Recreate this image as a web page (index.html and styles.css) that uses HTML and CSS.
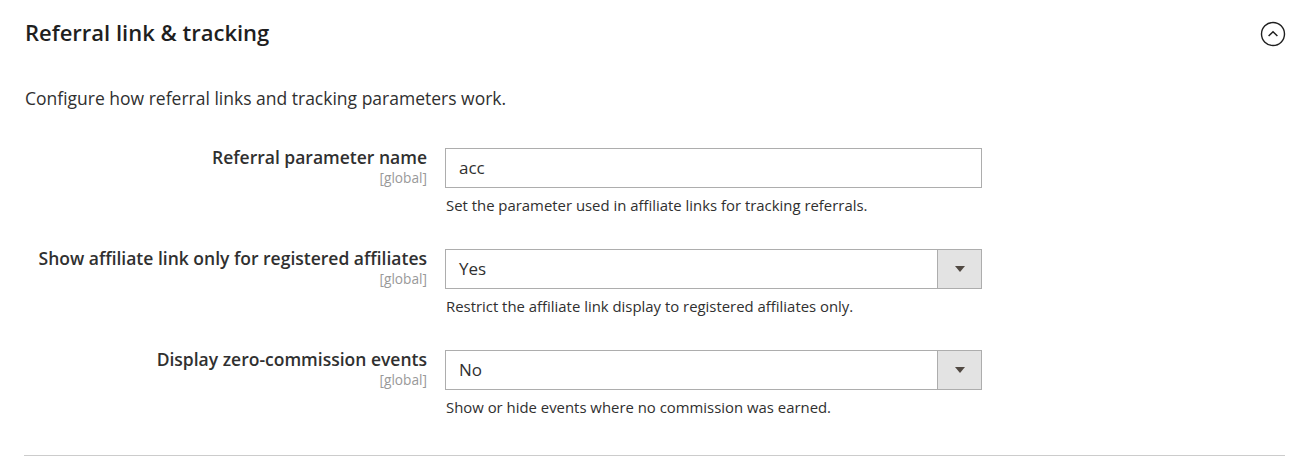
FILE: index.html
```html
<!DOCTYPE html>
<html lang="en">
<head>
	<meta charset="UTF-8">
	<title>Referral link &amp; tracking</title>
	<link rel="stylesheet" href="styles.css">
</head>
<body>
	<div class="section">
		<div class="section-head">
			<h3>Referral link &amp; tracking</h3>
			<span class="toggle">
				<svg width="26" height="26" viewBox="0 0 26 26">
					<circle cx="13" cy="13" r="11.5" fill="none" stroke="#1f1f1f" stroke-width="1.4"/>
					<path d="M8.6 15 L13 10.8 L17.4 15" fill="none" stroke="#1f1f1f" stroke-width="1.5"/>
				</svg>
			</span>
		</div>
		<p class="comment">Configure how referral links and tracking parameters work.</p>

		<div class="row">
			<div class="label">
				<label>Referral parameter name</label>
				<span class="scope">[global]</span>
			</div>
			<div class="value">
				<input class="input-text" type="text" value="acc">
				<p class="note">Set the parameter used in affiliate links for tracking referrals.</p>
			</div>
		</div>

		<div class="row">
			<div class="label">
				<label>Show affiliate link only for registered affiliates</label>
				<span class="scope">[global]</span>
			</div>
			<div class="value">
				<div class="select">
					<span class="select-text">Yes</span>
					<span class="select-arrow"></span>
				</div>
				<p class="note">Restrict the affiliate link display to registered affiliates only.</p>
			</div>
		</div>

		<div class="row">
			<div class="label">
				<label>Display zero-commission events</label>
				<span class="scope">[global]</span>
			</div>
			<div class="value">
				<div class="select">
					<span class="select-text">No</span>
					<span class="select-arrow"></span>
				</div>
				<p class="note">Show or hide events where no commission was earned.</p>
			</div>
		</div>
	</div>
</body>
</html>
```

FILE: styles.css
```css
body, h3, p {
	margin: 0;
	padding: 0;
}

body {
	background-color: #FFF;
	font-family: "Open Sans", "Liberation Sans", sans-serif;
	color: #303030;
}

.section {
	padding: 17px 23px 0 25px;
}

.section-head {
	display: flex;
	justify-content: space-between;
	align-items: center;
	height: 30px;
}

.section-head h3 {
	font-size: 22px;
	line-height: 28px;
	font-weight: 600;
	color: #1f1f1f;
}

.toggle {
	display: flex;
	margin-right: -1px;
	margin-top: 4px;
}

.comment {
	margin-top: 40px;
	font-size: 17.5px;
	line-height: 22px;
}

.row {
	display: grid;
	grid-template-columns: 402px 537px;
	column-gap: 18px;
	margin-top: 39px;
}

.row + .row {
	margin-top: 35px;
}

.label {
	text-align: right;
	margin-top: -3px;
}

.label label {
	display: block;
	font-size: 17.5px;
	line-height: 24px;
	font-weight: 600;
}

.scope {
	display: block;
	font-size: 13.7px;
	line-height: 18px;
	color: #999;
}

.input-text,
.select {
	display: flex;
	align-items: center;
	box-sizing: border-box;
	width: 100%;
	height: 40px;
	border: 1px solid #ADADAD;
	background-color: #FFF;
	font-family: inherit;
	font-size: 17px;
	color: #303030;
}

.input-text {
	padding: 0 13px 2px;
	outline: none;
}

.select-text {
	flex: 1;
	padding: 0 0 2px 13px;
}

.select-arrow {
	width: 43px;
	height: 100%;
	border-left: 1px solid #ADADAD;
	background-color: #E3E3E3;
	position: relative;
}

/* 小三角 */
.select-arrow:after {
	content: '';
	position: absolute;
	left: 17px;
	top: 16px;
	border-left: 5px solid transparent;
	border-right: 5px solid transparent;
	border-top: 6px solid #514943;
}

.note {
	margin-top: 8px;
	font-size: 14.9px;
	line-height: 18px;
	margin-left: 1px;
}

.section:after {
	content: '';
	display: block;
	margin-top: 39px;
	border-top: 1px solid #CCC;
	margin-left: -1px;
}
```
